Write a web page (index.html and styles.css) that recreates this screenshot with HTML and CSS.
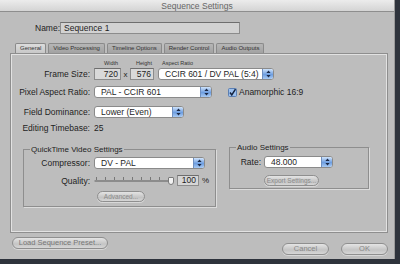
FILE: index.html
```html
<!DOCTYPE html>
<html lang="en">
<head>
    <meta charset="UTF-8">
    <title>Sequence Settings</title>
    <link rel="stylesheet" href="styles.css">
</head>
<body>
    <div class="window">
        <div class="titlebar">Sequence Settings</div>

        <div class="name-row">
            <label class="name-label">Name:</label>
            <div class="field name-field">Sequence 1</div>
        </div>

        <div class="tabs">
            <span class="tab active">General</span>
            <span class="tab">Video Processing</span>
            <span class="tab">Timeline Options</span>
            <span class="tab">Render Control</span>
            <span class="tab">Audio Outputs</span>
        </div>

        <div class="panel">
            <div class="captions">
                <span class="cap cap-w">Width</span>
                <span class="cap cap-h">Height</span>
                <span class="cap cap-a">Aspect Ratio</span>
            </div>

            <div class="row">
                <span class="label">Frame Size:</span>
                <div class="field num w-width">720</div>
                <span class="times">x</span>
                <div class="field num w-height">576</div>
                <div class="popup w-aspect">
                    <span class="popup-text">CCIR 601 / DV PAL (5:4)</span>
                    <span class="popup-arrows"><svg width="5" height="8" viewBox="0 0 5 8"><path d="M2.5 0.5 L4.6 3 H0.4 Z M2.5 7.5 L4.6 5 H0.4 Z" fill="#1c2a48"/></svg></span>
                </div>
            </div>

            <div class="row row-pixel">
                <span class="label">Pixel Aspect Ratio:</span>
                <div class="popup w-pixel">
                    <span class="popup-text">PAL - CCIR 601</span>
                    <span class="popup-arrows"><svg width="5" height="8" viewBox="0 0 5 8"><path d="M2.5 0.5 L4.6 3 H0.4 Z M2.5 7.5 L4.6 5 H0.4 Z" fill="#1c2a48"/></svg></span>
                </div>
                <span class="check">
                    <svg width="9" height="9" viewBox="0 0 9 9"><rect x="0.5" y="0.5" width="8" height="8" rx="1" fill="#9cc0ee" stroke="#5b7fb3"/><path d="M2 4.5 L3.8 7 L7.5 1.2" fill="none" stroke="#15233f" stroke-width="1.5"/></svg>
                    Anamorphic 16:9
                </span>
            </div>

            <div class="row row-field">
                <span class="label">Field Dominance:</span>
                <div class="popup w-field">
                    <span class="popup-text">Lower (Even)</span>
                    <span class="popup-arrows"><svg width="5" height="8" viewBox="0 0 5 8"><path d="M2.5 0.5 L4.6 3 H0.4 Z M2.5 7.5 L4.6 5 H0.4 Z" fill="#1c2a48"/></svg></span>
                </div>
            </div>

            <div class="row row-timebase">
                <span class="label">Editing Timebase:</span>
                <span class="value">25</span>
            </div>

            <div class="groups">
                <fieldset class="group group-qt">
                    <legend>QuickTime Video Settings</legend>
                    <div class="row">
                        <span class="label label-qt">Compressor:</span>
                        <div class="popup w-comp">
                            <span class="popup-text">DV - PAL</span>
                            <span class="popup-arrows"><svg width="5" height="8" viewBox="0 0 5 8"><path d="M2.5 0.5 L4.6 3 H0.4 Z M2.5 7.5 L4.6 5 H0.4 Z" fill="#1c2a48"/></svg></span>
                        </div>
                    </div>
                    <div class="row row-quality">
                        <span class="label label-qt">Quality:</span>
                        <div class="slider">
                            <span class="track"></span>
                            <span class="ticks"></span>
                            <span class="thumb"></span>
                        </div>
                        <div class="field num w-quality">100</div>
                        <span class="pct">%</span>
                    </div>
                    <div class="btn btn-advanced">Advanced...</div>
                </fieldset>

                <fieldset class="group group-audio">
                    <legend>Audio Settings</legend>
                    <div class="row">
                        <span class="rate-label">Rate:</span>
                        <div class="popup w-rate">
                            <span class="popup-text">48.000</span>
                            <span class="popup-arrows"><svg width="5" height="8" viewBox="0 0 5 8"><path d="M2.5 0.5 L4.6 3 H0.4 Z M2.5 7.5 L4.6 5 H0.4 Z" fill="#1c2a48"/></svg></span>
                        </div>
                    </div>
                    <div class="btn btn-export">Export Settings...</div>
                </fieldset>
            </div>
        </div>

        <div class="footer">
            <div class="btn btn-load">Load Sequence Preset...</div>
            <div class="footer-right">
                <div class="btn btn-cancel">Cancel</div>
                <div class="btn btn-ok">OK</div>
            </div>
        </div>
    </div>
</body>
</html>
```

FILE: styles.css
```css
* {
    margin: 0;
    padding: 0;
    box-sizing: border-box;
    font-family: 'Liberation Sans', Arial, sans-serif;
}

body {
    background: #2e333c;
    width: 400px;
    height: 264px;
    overflow: hidden;
    color: #1e1e1e;
    font-size: 8px;
}

.window {
    width: 395px;
    height: 259px;
    background: #bdbdbd;
    border-right: 1px solid #9a9a9a;
}

.titlebar {
    height: 12px;
    background: linear-gradient(#ececec, #d4d4d4);
    border-bottom: 1px solid #8e8e8e;
    text-align: center;
    font-size: 8.5px;
    line-height: 12px;
    color: #666;
}

.name-row {
    display: flex;
    align-items: center;
    margin-top: 10px;
    padding-left: 35px;
    height: 12px;
}

.name-label {
    width: 25px;
    font-size: 8.5px;
}

.field {
    height: 12px;
    background: #d9d9d9;
    border: 1px solid #8c8c8c;
    border-top-color: #6e6e6e;
    font-size: 8.5px;
    line-height: 10px;
    padding: 0 3px;
}

.name-field {
    width: 180px;
    background: #d2d2d2;
}

.tabs {
    display: flex;
    margin-top: 9px;
    margin-left: 15px;
    height: 10px;
}

.tab {
    font-size: 6px;
    line-height: 9px;
    padding: 0 4px;
    margin-right: 2px;
    background: linear-gradient(#b6b6b6, #a2a2a2);
    border: 1px solid #8a8a8a;
    border-bottom: none;
    border-radius: 2px 2px 0 0;
    color: #333;
}

.tab.active {
    background: linear-gradient(#dcdcdc, #c8c8c8);
}

.panel {
    margin-left: 10px;
    width: 378px;
    height: 180px;
    border: 1px solid #8e8e8e;
    box-shadow: inset 1px 1px 0 #e2e2e2, inset -1px -1px 0 #e2e2e2;
    background: #bdbdbd;
}

.captions {
    display: flex;
    height: 6px;
    margin-top: 6px;
    font-size: 5.5px;
    line-height: 6px;
    color: #333;
}

.cap-w {
    margin-left: 93px;
}

.cap-h {
    margin-left: 18px;
}

.cap-a {
    margin-left: 10px;
}

.row {
    display: flex;
    align-items: center;
    height: 12px;
    margin-top: 2px;
}

.label {
    width: 83px;
    text-align: right;
    padding-right: 4px;
    font-size: 8.5px;
}

.num {
    text-align: right;
    padding-right: 2px;
}

.w-width {
    width: 27px;
}

.times {
    width: 9px;
    text-align: center;
}

.w-height {
    width: 24px;
}

.popup {
    display: flex;
    align-items: center;
    height: 12px;
    background: #fff;
    border: 1px solid #8a8a8a;
    border-radius: 3px;
    overflow: hidden;
    margin-left: 4px;
}

.row .label + .popup {
    margin-left: 0;
}

.popup-text {
    flex: 1;
    font-size: 8.5px;
    padding-left: 6px;
    white-space: nowrap;
    overflow: hidden;
}

.popup-arrows {
    width: 11px;
    height: 100%;
    display: flex;
    align-items: center;
    justify-content: center;
    background: linear-gradient(#cfe3fb, #6e9ee0 55%, #a9cbf4);
    border-left: 1px solid #6f8fbf;
}

.w-aspect {
    width: 116px;
}

.row-pixel {
    margin-top: 6px;
}

.w-pixel {
    width: 118px;
}

.check {
    display: flex;
    align-items: center;
    gap: 2px;
    margin-left: 16px;
    font-size: 8.5px;
}

.row-field {
    margin-top: 8px;
}

.w-field {
    width: 90px;
}

.row-timebase {
    margin-top: 5px;
    height: 10px;
}

.value {
    font-size: 8.5px;
}

.groups {
    display: flex;
    align-items: flex-start;
    margin-top: 12px;
}

.group {
    border: 1px solid #8e8e8e;
    box-shadow: 1px 1px 0 #dcdcdc;
    padding: 0;
}

.group legend {
    font-size: 8px;
    margin-left: 6px;
    padding: 0 1px;
}

.group-qt {
    margin-left: 12px;
    width: 193px;
    height: 62px;
}

.group-qt .row {
    margin-top: 3px;
}

.label-qt {
    width: 70px;
}

.w-comp {
    width: 111px;
}

.row-quality {
    margin-top: 6px !important;
    height: 11px !important;
}

.slider {
    position: relative;
    width: 82px;
    height: 10px;
    margin-left: -2px;
}

.track {
    position: absolute;
    left: 2px;
    right: 4px;
    top: 4px;
    height: 2px;
    background: #fafafa;
    border: 1px solid #8c8c8c;
    border-radius: 1px;
}

.ticks {
    position: absolute;
    left: 4px;
    right: 6px;
    top: 1px;
    height: 3px;
    background: repeating-linear-gradient(90deg, #777 0 1px, transparent 1px 9px);
}

.thumb {
    position: absolute;
    right: 0;
    top: 1px;
    width: 6px;
    height: 8px;
    background: #f2f2f2;
    border: 1px solid #7a7a7a;
    border-radius: 1px 1px 3px 3px;
}

.w-quality {
    width: 22px;
    height: 11px;
    margin-left: 3px;
    line-height: 9px;
    background: #d6d6d6;
}

.pct {
    margin-left: 3px;
    font-size: 8px;
}

.btn {
    height: 12px;
    border: 1px solid #8f8f8f;
    border-radius: 6px;
    background: linear-gradient(#e4e4e4, #c4c4c4 60%, #d6d6d6);
    font-size: 6.5px;
    line-height: 10px;
    text-align: center;
    color: #8a8a8a;
    box-shadow: 0 1px 0 #d8d8d8;
}

.btn-advanced {
    width: 48px;
    height: 11px;
    margin-top: 5px;
    margin-left: 73px;
}

.group-audio {
    margin-left: 13px;
    width: 140px;
    height: 46px;
    margin-top: -2px;
}

.group-audio .row {
    margin-top: 4px;
}

.rate-label {
    width: 34px;
    text-align: right;
    padding-right: 3px;
    font-size: 8.5px;
}

.w-rate {
    width: 69px;
    margin-left: 0;
}

.btn-export {
    width: 55px;
    height: 11px;
    margin-top: 7px;
    margin-left: 34px;
}

.footer {
    display: flex;
    justify-content: space-between;
    align-items: flex-start;
    padding: 4px 6px 0 12px;
}

.btn-load {
    width: 96px;
    height: 12px;
    font-size: 7.5px;
    color: #777;
}

.footer-right {
    display: flex;
    gap: 12px;
    margin-top: 6px;
}

.btn-cancel,
.btn-ok {
    width: 47px;
    height: 12px;
    font-size: 7.5px;
    color: #888;
}
```
